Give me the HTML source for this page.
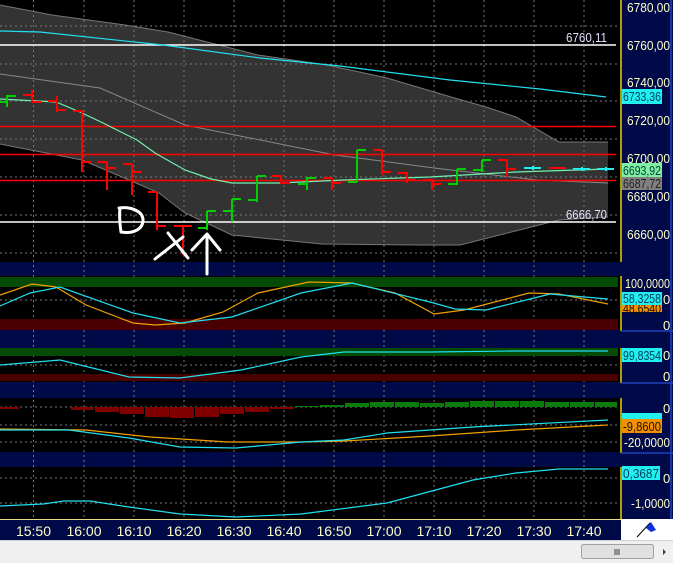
<!DOCTYPE html>
<html><head><meta charset="utf-8"><style>
html,body{margin:0;padding:0;background:#000;}
svg{display:block}
text{font-family:"Liberation Sans",sans-serif;}
</style></head><body>
<svg width="673" height="563" viewBox="0 0 673 563" xmlns="http://www.w3.org/2000/svg">
<rect width="673" height="563" fill="#000"/>
<rect x="0" y="262" width="621" height="14" fill="#000a48"/>
<rect x="0" y="330" width="621" height="18" fill="#000a48"/>
<rect x="0" y="382" width="621" height="16" fill="#000a48"/>
<rect x="0" y="452" width="621" height="15" fill="#000a48"/>
<rect x="621" y="0" width="52" height="519" fill="#000a48"/>
<line x1="621" y1="0" x2="621" y2="262" stroke="#e8d000" stroke-width="1.5"/>
<line x1="671" y1="0" x2="671" y2="519" stroke="#2040c0" stroke-width="1.5"/>
<polygon fill="#333" points="0,5 52,15 125,25 168,32 258,55 327,65 387,78 451,97 486,107 516,117 559,142 608,142 608,217 559,220 460,245 421,245 322,244 232,235 185,213 159,193 129,180 82,160 0,144"/>
<polyline fill="none" stroke="#777" stroke-width="1" points="0,5 52,15 125,25 168,32 258,55 327,65 387,78 451,97 486,107 516,117 559,142 608,142"/>
<polyline fill="none" stroke="#777" stroke-width="1" points="0,144 82,160 129,180 159,193 185,213 232,235 322,244 421,245 460,245 559,220 608,217"/>
<polyline fill="none" stroke="#888" stroke-width="1" points="0,74 100,88 185,125 335,155 434,168 537,180 608,183"/>
<g stroke="#777" stroke-width="1" stroke-dasharray="2,3">
<line x1="33.5" y1="0" x2="33.5" y2="519"/><line x1="84" y1="0" x2="84" y2="519"/><line x1="134" y1="0" x2="134" y2="519"/><line x1="184" y1="0" x2="184" y2="519"/><line x1="234" y1="0" x2="234" y2="519"/><line x1="284" y1="0" x2="284" y2="519"/><line x1="334" y1="0" x2="334" y2="519"/><line x1="384" y1="0" x2="384" y2="519"/><line x1="434" y1="0" x2="434" y2="519"/><line x1="484" y1="0" x2="484" y2="519"/><line x1="534" y1="0" x2="534" y2="519"/><line x1="584" y1="0" x2="584" y2="519"/>
<line x1="0" y1="26" x2="620" y2="26"/><line x1="0" y1="64" x2="620" y2="64"/><line x1="0" y1="101" x2="620" y2="101"/><line x1="0" y1="139" x2="620" y2="139"/><line x1="0" y1="177" x2="620" y2="177"/><line x1="0" y1="215" x2="620" y2="215"/><line x1="0" y1="253" x2="620" y2="253"/>
<line x1="0" y1="300" x2="620" y2="300"/><line x1="0" y1="365" x2="620" y2="365"/><line x1="0" y1="407" x2="620" y2="407"/><line x1="0" y1="425" x2="620" y2="425"/><line x1="0" y1="442" x2="620" y2="442"/><line x1="0" y1="478" x2="620" y2="478"/><line x1="0" y1="503" x2="620" y2="503"/>
</g>
<line x1="0" y1="45" x2="616" y2="45" stroke="#fff" stroke-width="1.5"/>
<line x1="0" y1="222" x2="616" y2="222" stroke="#fff" stroke-width="1.5"/>
<line x1="0" y1="126.5" x2="616" y2="126.5" stroke="#f00" stroke-width="1.5"/>
<line x1="0" y1="154.5" x2="616" y2="154.5" stroke="#f00" stroke-width="1.5"/>
<line x1="0" y1="180.5" x2="616" y2="180.5" stroke="#f00" stroke-width="1.5"/>
<polyline fill="none" stroke="#20e0f0" stroke-width="1.2" points="0,31 40,32 163,45 260,58 340,66 450,80 540,89 606,97"/>
<polyline fill="none" stroke="#70f0b0" stroke-width="1.2" points="0,99 56,102 80,112 103,123 137,140 155,153 185,170 211,179 232,183 279,183 344,180 430,177 516,172 608,169"/>
<g stroke-width="2" fill="none">
<path stroke="#00d000" d="M7,95V107M0,102H7M7,96H16"/>
<path stroke="#f00" d="M32,90V102M23,95H32M32,102H41M57,96V112M48,101H57M57,110H66M82,110V172M73,111H82M82,162H91M107,162V190M98,162H107M107,168H116M132,164V195M123,164H132M132,172H141M157,192V230M148,192H157M157,226H166M183,226V255M174,226H183M183,226H192"/>
<path stroke="#00d000" d="M207,211V230M198,228H207M207,211H216M232,199V222M223,211H232M232,199H241M257,176V202M248,200H257M257,176H266M307,177V190M298,184H307M307,178H316M357,150V182M348,182H357M357,150H366M457,169V185M448,184H457M457,169H466M482,160V172M473,170H482M482,160H491"/>
<path stroke="#f00" d="M281,175V184M272,176H281M281,183H290M332,178V190M323,178H332M332,183H341M382,150V175M373,150H382M382,172H391M407,172V183M398,173H407M407,180H416M432,179V190M423,180H432M432,184H441M507,160V177M498,160H507M507,169H516M549,168H566"/>
<path stroke="#20f0f0" d="M524,168H541M533,166V170M573,169H590M582,167V171M597,169H614M606,167V171"/>
</g>
<g stroke="#fff" stroke-width="3" fill="none" stroke-linecap="round" stroke-linejoin="round">
<path d="M120,208C119,216 120,225 121,232M119,208C132,206 143,212 143,220C143,230 132,234 121,232"/>
<path d="M168,233L188,258M155,259L183,237"/>
<path d="M207,236V274M192,250L207,234L220,250"/>
</g>
<g fill="#ffffc8" font-size="13">
<text x="627" y="12" textLength="43" lengthAdjust="spacingAndGlyphs">6780,00</text>
<text x="627" y="50" textLength="43" lengthAdjust="spacingAndGlyphs">6760,00</text>
<text x="627" y="87" textLength="43" lengthAdjust="spacingAndGlyphs">6740,00</text>
<text x="627" y="125" textLength="43" lengthAdjust="spacingAndGlyphs">6720,00</text>
<text x="627" y="163" textLength="43" lengthAdjust="spacingAndGlyphs">6700,00</text>
<text x="627" y="201" textLength="43" lengthAdjust="spacingAndGlyphs">6680,00</text>
<text x="627" y="239" textLength="43" lengthAdjust="spacingAndGlyphs">6660,00</text>
</g>
<rect x="622" y="89" width="40" height="15" fill="#20f0f0"/>
<text x="623" y="101" font-size="13" fill="#004060" textLength="38" lengthAdjust="spacingAndGlyphs">6733,36</text>
<rect x="622" y="163" width="40" height="14" fill="#80f0a0"/>
<text x="623" y="175" font-size="13" fill="#004040" textLength="38" lengthAdjust="spacingAndGlyphs">6693,92</text>
<rect x="622" y="177" width="40" height="13" fill="#808080"/>
<text x="623" y="188" font-size="13" fill="#202020" textLength="38" lengthAdjust="spacingAndGlyphs">6687,72</text>
<text x="566" y="42" font-size="13" fill="#e0e0ff" textLength="41" lengthAdjust="spacingAndGlyphs">6760,11</text>
<text x="566" y="219" font-size="13" fill="#e0e0ff" textLength="41" lengthAdjust="spacingAndGlyphs">6666,70</text>
<rect x="0" y="277" width="618" height="10" fill="#054a05"/>
<rect x="0" y="319" width="618" height="11" fill="#4a0000"/>
<polyline fill="none" stroke="#f0a000" stroke-width="1.2" points="0,295 32,284 56,287 86,305 133,323 155,325 185,323 223,312 258,293 309,282 352,283 395,293 434,314 464,310 529,293 559,294 608,304"/>
<polyline fill="none" stroke="#20e0f0" stroke-width="1.2" points="0,306 30,293 60,287 133,313 180,323 232,317 301,293 352,283 430,302 455,309 486,310 550,294 608,299"/>
<line x1="621" y1="276" x2="621" y2="331" stroke="#e8d000" stroke-width="1.5"/>
<line x1="621" y1="331" x2="673" y2="331" stroke="#2040c0" stroke-width="1.5"/>
<text x="625" y="288" font-size="13" fill="#ffffc8" textLength="45" lengthAdjust="spacingAndGlyphs">100,0000</text>
<rect x="622" y="302" width="40" height="10" fill="#f09000"/>
<text x="623" y="313" font-size="13" fill="#201000" textLength="38" lengthAdjust="spacingAndGlyphs">48,6540</text>
<rect x="622" y="292" width="40" height="13" fill="#20f0f0"/>
<text x="623" y="303" font-size="13" fill="#004060" textLength="38" lengthAdjust="spacingAndGlyphs">58,3258</text>
<text x="663" y="304" font-size="13" fill="#ffffc8">0</text>
<text x="663" y="330" font-size="13" fill="#ffffc8">0</text>
<rect x="0" y="348" width="618" height="8" fill="#054a05"/>
<rect x="0" y="374" width="618" height="7" fill="#4a0000"/>
<polyline fill="none" stroke="#20e0f0" stroke-width="1.2" points="0,365 60,360 129,377 180,378 241,370 301,357 344,352 430,352 516,351 608,351"/>
<line x1="621" y1="348" x2="621" y2="383" stroke="#e8d000" stroke-width="1.5"/>
<line x1="621" y1="383" x2="673" y2="383" stroke="#2040c0" stroke-width="1.5"/>
<rect x="622" y="348" width="40" height="14" fill="#20f0f0"/>
<text x="623" y="360" font-size="13" fill="#004060" textLength="38" lengthAdjust="spacingAndGlyphs">99,8354</text>
<text x="663" y="360" font-size="13" fill="#ffffc8">0</text>
<text x="663" y="381" font-size="13" fill="#ffffc8">0</text>
<g fill="#800000">
<rect x="0" y="407" width="19" height="2"/><rect x="71" y="407" width="23" height="3"/><rect x="95" y="407" width="24" height="5"/><rect x="120" y="407" width="24" height="7"/><rect x="145" y="407" width="24" height="10"/><rect x="170" y="407" width="24" height="11"/><rect x="195" y="407" width="24" height="10"/><rect x="220" y="407" width="24" height="7"/><rect x="245" y="407" width="24" height="5"/><rect x="270" y="407" width="24" height="2"/>
</g>
<g fill="#0a7a0a">
<rect x="295" y="406" width="24" height="1"/><rect x="320" y="405" width="24" height="2"/><rect x="345" y="403" width="24" height="4"/><rect x="370" y="402" width="24" height="5"/><rect x="395" y="402" width="24" height="5"/><rect x="420" y="403" width="24" height="4"/><rect x="445" y="402" width="24" height="5"/><rect x="470" y="401" width="24" height="6"/><rect x="495" y="401" width="24" height="6"/><rect x="520" y="401" width="24" height="6"/><rect x="545" y="402" width="24" height="5"/><rect x="570" y="402" width="24" height="5"/><rect x="595" y="402" width="22" height="5"/>
</g>
<polyline fill="none" stroke="#f0a000" stroke-width="1.2" points="0,429 86,430 150,437 228,442 301,442 344,441 430,436 516,430 608,425"/>
<polyline fill="none" stroke="#20e0f0" stroke-width="1.2" points="0,430 69,430 129,438 180,447 236,448 301,442 344,440 387,433 473,427 608,420"/>
<line x1="621" y1="398" x2="621" y2="453" stroke="#e8d000" stroke-width="1.5"/>
<line x1="621" y1="453" x2="673" y2="453" stroke="#2040c0" stroke-width="1.5"/>
<text x="663" y="413" font-size="13" fill="#ffffc8">0</text>
<rect x="622" y="413" width="40" height="7" fill="#20f0f0"/>
<rect x="622" y="419" width="40" height="14" fill="#f09000"/>
<text x="623" y="431" font-size="13" fill="#201000" textLength="38" lengthAdjust="spacingAndGlyphs">-9,8600</text>
<text x="624" y="447" font-size="13" fill="#ffffc8" textLength="46" lengthAdjust="spacingAndGlyphs">-20,0000</text>
<polyline fill="none" stroke="#20e0f0" stroke-width="1.2" points="0,506 43,504 64,501 90,501 129,507 180,514 236,517 301,514 387,503 473,480 516,473 559,469 608,469"/>
<line x1="621" y1="467" x2="621" y2="519" stroke="#e8d000" stroke-width="1.5"/>
<rect x="622" y="466" width="38" height="14" fill="#20f0f0"/>
<text x="623" y="478" font-size="13" fill="#004060" textLength="36" lengthAdjust="spacingAndGlyphs">0,3687</text>
<text x="663" y="483" font-size="13" fill="#ffffc8">0</text>
<text x="631" y="508" font-size="13" fill="#ffffc8" textLength="39" lengthAdjust="spacingAndGlyphs">-1,0000</text>
<rect x="0" y="519" width="621" height="21" fill="#000a48"/>
<line x1="0" y1="519.5" x2="621" y2="519.5" stroke="#e8e080" stroke-width="1"/>
<rect x="621" y="519" width="52" height="21" fill="#fff"/>
<path d="M637,537L650,523" stroke="#000" stroke-width="1"/>
<path d="M646,528L651,522L656,530L651,532Z" fill="#1030e0"/>
<g fill="#ffffc8" font-size="14" text-anchor="middle">
<text x="33.5" y="536">15:50</text><text x="84" y="536">16:00</text><text x="134" y="536">16:10</text><text x="184" y="536">16:20</text><text x="234" y="536">16:30</text><text x="284" y="536">16:40</text><text x="334" y="536">16:50</text><text x="384" y="536">17:00</text><text x="434" y="536">17:10</text><text x="484" y="536">17:20</text><text x="534" y="536">17:30</text><text x="584" y="536">17:40</text>
</g>
<rect x="0" y="540" width="673" height="23" fill="#f0f0f0"/>
<line x1="0" y1="540.5" x2="673" y2="540.5" stroke="#d0d0d0"/>
<rect x="581.5" y="544.5" width="72" height="14" rx="2" fill="#e0e0e0" stroke="#a0a0a0"/>
<path d="M615,549V555M617,549V555M619,549V555" stroke="#404040"/>
<path d="M663,549L666,552L663,555Z" fill="#404040"/>
</svg>
</body></html>
